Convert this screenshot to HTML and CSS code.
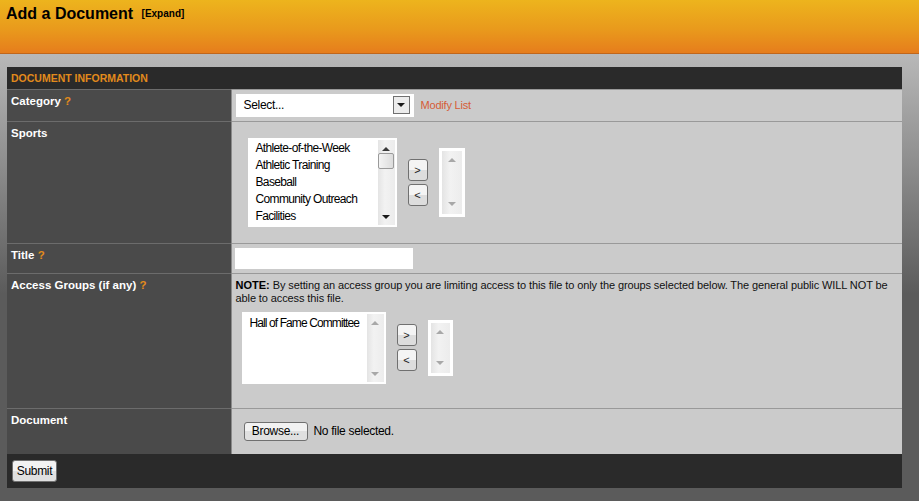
FILE: index.html
```html
<!DOCTYPE html>
<html lang="en">
<head>
    <meta charset="UTF-8">
    <title>Add a Document</title>
    <link rel="stylesheet" href="styles.css">
</head>
<body>
    <!--页面顶部标题栏-->
    <div class="topbar">
        <h1 class="page-title">Add a Document <a class="expand" href="javascript:;">[Expand]</a></h1>
    </div>

    <div class="content">
        <table class="form-table">
            <tr class="section-row">
                <th colspan="2">DOCUMENT INFORMATION</th>
            </tr>
            <tr class="row-category">
                <td class="label">Category <span class="help">?</span></td>
                <td class="value">
                    <div class="field-line">
                        <div class="dropdown">
                            <span class="dropdown-text">Select...</span>
                            <span class="dropdown-btn"><i class="arrow-down dark"></i></span>
                        </div>
                        <a class="modify" href="javascript:;">Modify List</a>
                    </div>
                </td>
            </tr>
            <tr class="row-sports">
                <td class="label">Sports</td>
                <td class="value">
                    <div class="transfer sports">
                        <div class="listbox">
                            <ul class="options">
                                <li>Athlete-of-the-Week</li>
                                <li>Athletic Training</li>
                                <li>Baseball</li>
                                <li>Community Outreach</li>
                                <li>Facilities</li>
                            </ul>
                            <div class="scrollbar">
                                <i class="arrow-up dark"></i>
                                <span class="thumb"></span>
                                <i class="arrow-down dark"></i>
                            </div>
                        </div>
                        <div class="move-btns">
                            <button class="move" type="button">&gt;</button>
                            <button class="move" type="button">&lt;</button>
                        </div>
                        <div class="picked">
                            <div class="scrollbar">
                                <i class="arrow-up"></i>
                                <i class="arrow-down"></i>
                            </div>
                        </div>
                    </div>
                </td>
            </tr>
            <tr class="row-title">
                <td class="label">Title <span class="help">?</span></td>
                <td class="value">
                    <input class="text-input" type="text">
                </td>
            </tr>
            <tr class="row-access">
                <td class="label">Access Groups (if any) <span class="help">?</span></td>
                <td class="value">
                    <p class="note"><b>NOTE:</b>&nbsp;By setting an access group you are limiting access to this file to only the groups selected below. The general public WILL NOT be able to access this file.</p>
                    <div class="transfer access">
                        <div class="listbox">
                            <ul class="options">
                                <li>Hall of Fame Committee</li>
                            </ul>
                            <div class="scrollbar">
                                <i class="arrow-up"></i>
                                <i class="arrow-down"></i>
                            </div>
                        </div>
                        <div class="move-btns">
                            <button class="move" type="button">&gt;</button>
                            <button class="move" type="button">&lt;</button>
                        </div>
                        <div class="picked">
                            <div class="scrollbar">
                                <i class="arrow-up"></i>
                                <i class="arrow-down"></i>
                            </div>
                        </div>
                    </div>
                </td>
            </tr>
            <tr class="row-document">
                <td class="label">Document</td>
                <td class="value">
                    <div class="file-line">
                        <button class="btn" type="button">Browse...</button>
                        <span class="file-name">No file selected.</span>
                    </div>
                </td>
            </tr>
            <tr class="submit-row">
                <td colspan="2"><button class="btn submit" type="button">Submit</button></td>
            </tr>
        </table>
    </div>
</body>
</html>
```

FILE: styles.css
```css
*{
    margin: 0;
    padding: 0;
    box-sizing: border-box;
}
html, body{
    height: 100%;
}
body{
    font-family: "Liberation Sans", Arial, sans-serif;
    font-size: 11px;
    color: #000;
    background-color: #5a5a5a;
}
/*顶部橙色标题栏*/
.topbar{
    height: 54px;
    background: linear-gradient(#edb41d, #e99a1c 55%, #e67d1c);
    border-bottom: 1px solid #c0661b;
}
.page-title{
    font-size: 16px;
    font-weight: bold;
    line-height: 20px;
    padding: 4px 6px;
    color: #000;
}
.expand{
    font-size: 10px;
    color: #000;
    text-decoration: none;
    margin-left: 4px;
    vertical-align: 2px;
}
/*灰色渐变背景*/
.content{
    padding: 13px 17px 13px 7px;
    background: #5a5a5a linear-gradient(#b8b8b8, #5b5b5b 240px) no-repeat;
    min-height: calc(100% - 54px);
}
.form-table{
    width: 895px;
    border-collapse: collapse;
}
.section-row th{
    height: 22px;
    background-color: #2a2a2a;
    color: #e28a1c;
    font-size: 10.5px;
    font-weight: bold;
    text-align: left;
    padding: 1px 4px 0;
}
.label{
    width: 224px;
    background-color: #4a4a4a;
    color: #fff;
    font-size: 11.5px;
    font-weight: bold;
    vertical-align: top;
    padding: 5px 4px;
    border-top: 1px solid #6c6c6c;
    border-right: 1px solid #8a8a8a;
}
.help{
    color: #e28a1c;
}
.value{
    background-color: #cbcbcb;
    vertical-align: top;
    border-top: 1px solid #999;
    padding: 0 4px;
}
/*各行高度*/
.row-category td{ height: 32px; }
.row-sports td{ height: 122px; }
.row-title td{ height: 30px; }
.row-access td{ height: 135px; }
.row-document td{ height: 46px; }

.field-line{
    display: flex;
    align-items: center;
    padding-top: 4px;
}
.dropdown{
    width: 178px;
    height: 23px;
    background-color: #fff;
    display: flex;
    align-items: center;
    justify-content: space-between;
    padding: 0 4px 0 8px;
    font-size: 12px;
    letter-spacing: -0.3px;
}
.dropdown-btn{
    width: 17px;
    height: 18px;
    border: 1px solid #707070;
    background-color: #ececec;
    display: flex;
    align-items: center;
    justify-content: center;
}
.modify{
    color: #d65c36;
    text-decoration: none;
    margin-left: 7px;
    letter-spacing: -0.2px;
}
/*小三角*/
.arrow-up, .arrow-down{
    display: block;
    width: 0;
    height: 0;
    border-left: 4px solid transparent;
    border-right: 4px solid transparent;
}
.arrow-up{
    border-bottom: 4px solid #a8a8a8;
}
.arrow-down{
    border-top: 4px solid #a8a8a8;
}
.arrow-up.dark{
    border-bottom-color: #3a3a3a;
}
.arrow-down.dark{
    border-top-color: #1a1a1a;
}
/*列表选择框*/
.transfer{
    display: flex;
    align-items: center;
    gap: 11px;
}
.transfer > div{
    flex-shrink: 0;
}
.transfer.sports{
    margin: 16px 0 0 12px;
}
.transfer.access{
    margin: 7px 0 0 6px;
}
.listbox{
    display: flex;
    justify-content: space-between;
    background-color: #fff;
    padding: 2px;
}
.sports .listbox{
    width: 149px;
    height: 89px;
}
.access .listbox{
    width: 144px;
    height: 72px;
}
.options{
    list-style: none;
    font-size: 12px;
    line-height: 17px;
    padding-left: 6px;
    letter-spacing: -0.65px;
    white-space: nowrap;
}
.access .options{
    padding-top: 1px;
    letter-spacing: -0.9px;
}
.scrollbar{
    width: 17px;
    flex-shrink: 0;
    background: linear-gradient(90deg, #e4e4e4, #f2f2f2 40%, #ececec);
    display: flex;
    flex-direction: column;
    align-items: center;
    justify-content: space-between;
    padding: 7px 0 6px;
}
.thumb{
    width: 16px;
    height: 16px;
    border: 1px solid #9a9a9a;
    border-radius: 2px;
    background: linear-gradient(90deg, #f4f4f4, #dcdcdc);
    margin: 2px 0 auto;
}
.picked{
    background-color: #fff;
    padding: 3px;
    display: flex;
}
.sports .picked{
    width: 26px;
    height: 69px;
}
.access .picked{
    width: 25px;
    height: 56px;
}
.picked .scrollbar{
    width: 100%;
    padding: 7px 0 8px;
}
.move-btns{
    display: flex;
    flex-direction: column;
    gap: 3px;
}
.move{
    width: 20px;
    height: 22px;
    border: 1px solid #707070;
    border-radius: 3px;
    background: linear-gradient(#f4f4f4 50%, #dddddd 50%);
    font-family: "Liberation Sans", Arial, sans-serif;
    font-size: 11px;
    color: #222;
}
.text-input{
    display: block;
    width: 178px;
    height: 21px;
    border: none;
    background-color: #fff;
    margin: 4px 0 0 -1px;
}
.note{
    line-height: 13px;
    padding: 5px 0 0;
    color: #111;
    letter-spacing: -0.1px;
}
.note b{
    letter-spacing: 0;
    color: #000;
}
.file-line{
    display: flex;
    align-items: center;
    gap: 6px;
    padding: 13px 0 0 8px;
}
.btn{
    font-family: "Liberation Sans", Arial, sans-serif;
    font-size: 12px;
    color: #000;
    border: 1px solid #707070;
    border-radius: 3px;
    background: linear-gradient(#f2f2f2 50%, #e0e0e0 50%);
}
.file-line .btn{
    width: 64px;
    height: 19px;
    letter-spacing: -0.3px;
}
.file-name{
    font-size: 12px;
    letter-spacing: -0.3px;
}
.submit-row td{
    height: 34px;
    background-color: #2a2a2a;
    padding: 0 5px;
}
.submit{
    width: 45px;
    height: 22px;
    display: block;
    letter-spacing: -0.3px;
}
```
